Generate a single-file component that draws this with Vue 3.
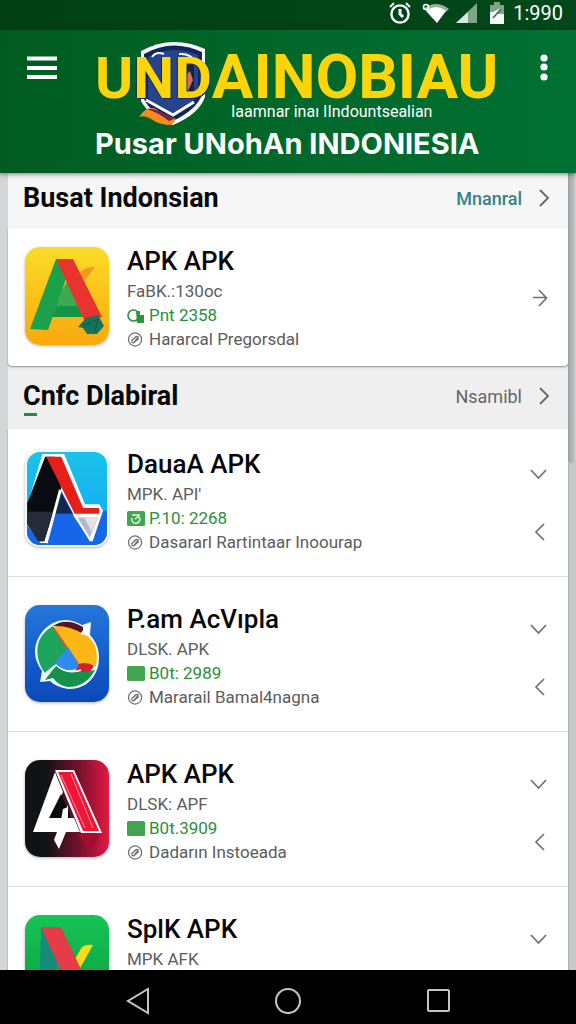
<script setup>
const featured = {
  art: 'yellow', name: 'APK APK', size: 'FaBK.:130oc', badge: 'tag', date: 'Pnt 2358', by: 'Hararcal Pregorsdal'
}
const apps = [
  { art: 'cyan', name: 'DauaA APK', size: "MPK. API'", badge: 'ring', date: 'P.10: 2268', by: 'Dasararl Rartintaar Inoourap' },
  { art: 'blue', name: 'P.am AcVıpla', size: 'DLSK. APK', badge: 'solid', date: 'B0t: 2989', by: 'Mararail Bamal4nagna' },
  { art: 'red', name: 'APK APK', size: 'DLSK: APF', badge: 'solid', date: 'B0t.3909', by: 'Dadarın Instoeada' },
  { art: 'green', name: 'SplK APK', size: 'MPK AFK' }
]
const sections = [
  { title: 'Busat Indonsian', more: 'Mnanral', kind: 'first', items: [featured] },
  { title: 'Cnfc Dlabiral', more: 'Nsamibl', kind: 'second', items: apps }
]
</script>

<template>
  <div class="screen">
    <div class="status">
      <svg class="st-alarm" viewBox="0 0 24 24" fill="none" stroke="#fff">
        <circle cx="12" cy="13" r="8.6" stroke-width="2.4" />
        <path d="M12 8v5l3 3" stroke-width="3" />
        <path d="M2 6l4-4M22 6l-4-4" stroke-width="2" />
      </svg>
      <svg class="st-wifi" viewBox="0 0 28 22">
        <path d="M1 7Q14-3 27 7L24 10Q14 1 5 9Z" fill="#8fb397" />
        <path d="M4 9Q14 1 24 9L15 21Z" fill="#fff" />
        <circle cx="4" cy="5" r="2.5" fill="none" stroke="#fff" stroke-width="1.5" />
      </svg>
      <svg class="st-signal" viewBox="0 0 22 20">
        <path d="M21 0V20H0Z" fill="#7fa688" /><path d="M12 9V20H0Z" fill="#dce9dd" />
      </svg>
      <svg class="st-batt" viewBox="0 0 16 22">
        <path d="M5 0h6v3h4v19H1V3h4z" fill="#7fa688" />
        <path d="M1 10h3l8-4-5 6h8v10H1z" fill="#f4faf4" /><path d="M4 16L12 7" stroke="#3c6b45" stroke-width="1.5" />
      </svg>
      <span class="clock">1:990</span>
    </div>

    <header class="bar">
      <button class="menu" aria-label="Menu">
        <svg viewBox="0 0 30 24"><path d="M0 2.5h30M0 12h30M0 21h30" stroke="#fff" stroke-width="4" /></svg>
      </button>
      <div class="brand">
        <div class="logo">
          <svg class="shield" viewBox="0 0 68 86" aria-hidden="true">
            <path d="M2 10Q33-7 66 8V56Q60 73 34 84Q9 74 2 60Z" fill="#fff" />
            <path d="M5 13Q33-3 63 11V54Q57 69 34 80Q11 72 5 58Z" fill="#10265e" />
            <path d="M9 16Q33 3 59 14V52Q54 65 34 74Q14 67 9 56Z" fill="#26438b" />
            <path d="M13 16Q17 10 25 13M40 13Q52 12 58 22" fill="none" stroke="#fff" stroke-width="2" />
            <path d="M7 59L34 74L55 61" fill="none" stroke="#fff" stroke-width="3" />
            <path d="M41 24h14v34h-14z" fill="#17213f" />
            <path d="M45 36l6-6 3 9-5 11-4-3z" fill="#d4705c" />
            <path d="M0 76Q8 64 17 68Q25 75 37 78L33 84Q20 84 12 78Q6 74 0 76Z" fill="#f68b1f" />
            <path d="M8 68Q17 66 35 78L30 80Q18 71 8 68Z" fill="#7c2145" />
          </svg>
          <span class="word"><span class="start">U<span class="edge">ND</span></span>AINOBIAU</span>
        </div>
        <p class="tag">Iaamnar inaı IIndountsealian</p>
        <h1>Pusar UNohAn INDONIESIA</h1>
      </div>
      <button class="dots" aria-label="More options">
        <svg viewBox="0 0 8 28" fill="#fff"><circle cx="4" cy="4" r="3.6" /><circle cx="4" cy="13" r="3.6" /><circle cx="4" cy="23" r="3.6" /></svg>
      </button>
    </header>

    <main class="content">
      <section v-for="s in sections" :key="s.title" :class="['group', s.kind]">
        <div class="group-head">
          <h2>{{ s.title }}</h2>
          <a href="#" class="more">{{ s.more }}
            <svg viewBox="0 0 12 20" fill="none" stroke="#666" stroke-width="1.8"><path d="M2 2l8 8-8 8" /></svg>
          </a>
        </div>
        <ul class="card">
          <li v-for="a in s.items" :key="a.art" class="row">
            <div class="art" :class="a.art">
              <svg v-if="a.art === 'yellow'" viewBox="0 0 84 98">
                <path d="M54 26Q61 19 70 20Q65 27 60 34Z" fill="#ee9b22" />
                <path d="M28 54H52L58 70H26Z" fill="#169447" />
                <path d="M37 43l7-12 9 28H31z" fill="#3bab50" />
                <path d="M31 12h17L23 83 5 82Z" fill="#1ba149" />
                <path d="M31 12h17L77 70 60 75Z" fill="#e8332f" />
                <path d="M53 80L61 71 73 68 79 79 72 87H62L58 81Z" fill="#12745c" />
                <path d="M58 79l15-7-3 12" fill="none" stroke="#0d584c" />
              </svg>
              <svg v-else-if="a.art === 'cyan'" viewBox="0 0 84 98">
                <path d="M0 62H84V98H0Z" fill="#1667e8" />
                <path d="M16 2H39L61 55H76L80 62 69 94H57L48 67 36 42 22 96H14L0 77V57Z" fill="#fff" />
                <path d="M19 5H29L36 38 18 94H12L0 76V54Z" fill="#080b10" />
                <path d="M0 63H27L18 94H12L0 76Z" fill="#252c39" />
                <path d="M20 5H36L59 59H76V65H50Z" fill="#e62019" />
                <path d="M35 39L21 96H67L49 66Z" fill="#1667e8" /><path d="M35 41L27 65H48Z" fill="#12284d" />
                <path d="M35 40L20 96" stroke="#fff" stroke-width="3" />
                <path d="M48 66H78L67 94Z" fill="#fff" />
                <path d="M53 69H75L66 90Z" fill="#b5b7cc" /><path d="M60 69H75L68 84Z" fill="#e3e2eb" />
              </svg>
              <svg v-else-if="a.art === 'blue'" viewBox="0 0 84 98">
                <path d="M28 18Q41 11 57 20L66 17 65 30Q77 43 73 62Q66 84 43 84Q31 82 25 76L15 77 17 66Q4 48 15 30Q20 22 28 18Z" fill="#eafcff" />
                <path d="M28 21Q9 32 13 53Q15 62 20 68L30 57Z" fill="#18a65e" />
                <path d="M29 22Q47 14 61 30Q75 39 71 61L54 61 42 42Z" fill="#fdb715" />
                <path d="M28 21Q41 12 58 22V29Q44 20 28 21Z" fill="#5b1426" />
                <path d="M28 22L43 44 32 58 22 66Z" fill="#20a35a" />
                <path d="M28 22L54 60" stroke="#e2502c" stroke-width="1.5" />
                <path d="M43 42L28 60Q38 68 51 64L54 60Z" fill="#2e8bf0" />
                <path d="M54 59Q62 56 69 61L64 68 50 66Z" fill="#d51f2e" />
                <path d="M20 75L32 59Q42 71 70 65Q61 82 43 82Q34 81 28 73Z" fill="#16914a" />
                <path d="M17 75L31 60Q42 70 56 65" fill="none" stroke="#fff" stroke-width="1.5" /><path d="M55 29L64 18V31Z" fill="#fff" />
              </svg>
              <svg v-else-if="a.art === 'red'" viewBox="0 0 84 98">
                <path d="M62 72L76 75 67 88 52 75Z" fill="#a80c2d" />
                <path d="M30 12L38 32 26 58H36L43 45V58H49L55 72H41L34 89 29 80 32 72H8Z" fill="#fff" />
                <path d="M36 34L45 54V58H24Z" fill="#0c0c0f" />
                <path d="M38 49L43 47V60H36Z" fill="#fff" />
                <path d="M30 10H49L77 73H56Z" fill="#fff" />
                <path d="M33 12H48L74 71H58Z" fill="#ed1738" />
                <path d="M36 15L60 68M46 14L68 68" stroke="#ff8d9a" stroke-width="1" />
              </svg>
              <svg v-else viewBox="0 0 84 98">
                <path d="M16 12L32 42V98H14Z" fill="#148b7b" />
                <path d="M36 43L60 98H28Z" fill="#1264a4" />
                <path d="M50 44L57 32Q61 29 68 30L54 55Z" fill="#f9dc16" />
                <path d="M16 12H36L70 84H49Z" fill="#e63b49" />
              </svg>
            </div>
            <div class="info">
              <h3>{{ a.name }}</h3>
              <p>{{ a.size }}</p>
              <p v-if="a.date" class="date">
                <svg viewBox="0 0 18 15">
                  <template v-if="a.badge === 'tag'">
                    <circle cx="6.5" cy="7.5" r="5.5" fill="none" stroke="#2f9440" stroke-width="1.6" />
                    <path d="M9 3h4v4h4v8h-7z" fill="#2f9440" />
                  </template>
                  <template v-else>
                    <rect width="18" height="15" rx="1.5" fill="#43a550" />
                    <path v-if="a.badge === 'ring'" d="M5 4h8M5 7a4 4 0 1 0 7-1M8 8l4-3" fill="none" stroke="#e6f6e6" stroke-width="1.5" />
                  </template>
                </svg>
                {{ a.date }}
              </p>
              <p v-if="a.by">
                <svg viewBox="0 0 18 16" fill="none" stroke="#737373">
                  <circle cx="8" cy="8" r="7" stroke-width="1.4" />
                  <path d="M4 9.5L9 5q3-1 2 1L7 11q-3 1-2-1M6 12l6-5" stroke-width="1.5" />
                </svg>
                {{ a.by }}
              </p>
            </div>
            <div v-if="s.kind === 'first'" class="side single">
              <button aria-label="Open">
                <svg viewBox="0 0 20 20"><path d="M3 9.5h13M9 2l7.500 8L9 18" /></svg>
              </button>
            </div>
            <div v-else class="side">
              <button aria-label="Expand"><svg viewBox="0 0 20 20"><path d="M1 6l7.500 8L16 6" /></svg></button>
              <button v-if="a.by" aria-label="Back"><svg viewBox="0 0 20 20"><path d="M14 2l-8 8 8 8" /></svg></button>
            </div>
          </li>
        </ul>
      </section>
      <div class="thumb"></div>
    </main>

    <nav class="nav">
      <button aria-label="Back"><svg viewBox="0 0 28 28"><path d="M24 2v24L4 14z" /></svg></button>
      <button aria-label="Home"><svg viewBox="0 0 28 28"><circle cx="14" cy="14" r="12" /></svg></button>
      <button aria-label="Recent apps"><svg viewBox="0 0 28 28"><rect x="4" y="3" width="21" height="21" rx="1" /></svg></button>
    </nav>
  </div>
</template>

<style>
body { margin: 0; }
</style>

<style scoped>
* { box-sizing: border-box; }
.screen { display: flex; flex-direction: column; height: 100vh; overflow: hidden; font-family: Roboto, "Liberation Sans", sans-serif; color: #080808; }
h1, h2, h3, p, ul { margin: 0; padding: 0; }
button { border: 0; padding: 0; background: none; display: block; cursor: pointer; }
svg { display: block; flex: none; }

.status { flex: none; height: 30px; padding: 0 13px 4px 0; display: flex; justify-content: flex-end; align-items: center; background: linear-gradient(90deg, #003f14, #00481a); color: #fff; }
.st-alarm { width: 24px; height: 24px; margin-right: 10px; }
.st-wifi { width: 28px; height: 22px; margin-right: 6px; }
.st-signal { width: 22px; height: 20px; margin-right: 11px; }
.st-batt { width: 16px; height: 22px; margin-right: 8px; }
.clock { font-size: 20px; line-height: 26px; }

.bar { flex: none; position: relative; z-index: 2; display: flex; align-items: flex-start; padding: 20px 28px 11px 27px; background: linear-gradient(90deg, #005b20, #00682a 50%, #007033); box-shadow: 0 1px 5px rgba(0, 0, 0, .5); color: #fff; }
.menu { margin: 6px 38px 0 0; }
.menu svg { width: 30px; height: 24px; }
.dots { margin: 4px 0 0 auto; }
.dots svg { width: 8px; height: 28px; }
.logo { position: relative; height: 54px; }
.shield { position: absolute; left: 43px; top: -9px; width: 70px; height: 86px; }
.word { position: relative; font-size: 62px; line-height: 54px; font-weight: 700; color: #fbd509; white-space: nowrap; }
.start { font-size: 58px; }
.edge { text-shadow: 1px 1px 0 #10265e, -1px 0 0 #10265e; }
.tag { position: relative; padding-left: 136px; font-size: 16px; line-height: 16px; white-space: nowrap; }
h1 { margin-top: 6px; font: 700 29px/36px Inter, "Liberation Sans", sans-serif; white-space: nowrap; }

.content { position: relative; flex: 1; min-height: 0; overflow: hidden; padding: 0 8px; background: linear-gradient(90deg, #d5d6d9, #dcdddf 50%, #c8c9cb); }
.thumb { position: absolute; right: 0; top: 0; width: 8px; height: 290px; background: #b1b6b6; border-left: 2px solid #a0a3a3; border-right: 2px solid #c7cecd; border-radius: 0 0 4px 4px; }
.group-head { display: flex; justify-content: space-between; padding: 0 18px 0 15px; }
.first .group-head { height: 55px; padding-top: 9px; background: #f6f6f6; }
.second .group-head { height: 63px; padding-top: 14px; background: #efeff0; }
h2 { font-size: 27px; line-height: 32px; font-weight: 700; }
.second h2::after { content: ""; display: block; width: 13px; height: 3px; margin: 1px 0 0 1px; background: #189048; }
.more { display: flex; align-items: center; gap: 16px; height: 32px; font-size: 18px; font-weight: 500; color: #37828a; text-decoration: none; }
.second .more { color: #666; font-weight: 400; }
.more svg { width: 12px; height: 20px; }
.card { list-style: none; background: #fff; border-radius: 0 0 4px 4px; box-shadow: 0 1px 2px rgba(0, 0, 0, .4); position: relative; }
.row { display: flex; align-items: flex-start; min-height: 155px; padding: 28px 17px 22px; border-bottom: 1px solid #dedede; }
.second .row:first-child { min-height: 148px; padding-top: 21px; }
.first .row { min-height: 138px; padding: 19px 17px 15px; border: 0; }
.art { flex: none; width: 84px; height: 97px; border-radius: 15px; overflow: hidden; box-shadow: 0 1px 3px rgba(0, 0, 0, .3); }
.art svg { width: 84px; height: 98px; }
.yellow { background: linear-gradient(#fbdc27, #f9a80d); height: 98px; }
.cyan { background: linear-gradient(#1bc2e8, #12a8fa); border: 2px solid #f1f8fb; }
.cyan svg { width: 80px; height: 93px; }
.blue { background: linear-gradient(#2476db, #0b48ba); }
.red { background: linear-gradient(90deg, #111215 25%, #78102d 65%, #e41842); }
.green { background: linear-gradient(#17c456, #079b39); }
.info { flex: 1; min-width: 0; padding-left: 18px; }
h3 { font-size: 26px; line-height: 28px; margin-bottom: 4px; font-weight: 500; white-space: nowrap; }
.info p { display: flex; align-items: center; gap: 4px; font-size: 17px; line-height: 24px; color: #5c5c5c; white-space: nowrap; }
.info p svg { width: 18px; height: 15px; }
.info .date { color: #2a8f38; }
.side { flex: none; display: flex; flex-direction: column; gap: 38px; padding: 14px 1px 0 0; }
.side.single { padding-top: 41px; }
.side svg { width: 20px; height: 20px; fill: none; stroke: #707070; stroke-width: 1.700; }

.nav { flex: none; height: 54px; padding: 8px 63px 0; display: flex; justify-content: space-around; align-items: center; background: #000; position: relative; z-index: 2; }
.nav svg { width: 28px; height: 28px; fill: none; stroke: #c6c6c6; stroke-width: 2; }
</style>
